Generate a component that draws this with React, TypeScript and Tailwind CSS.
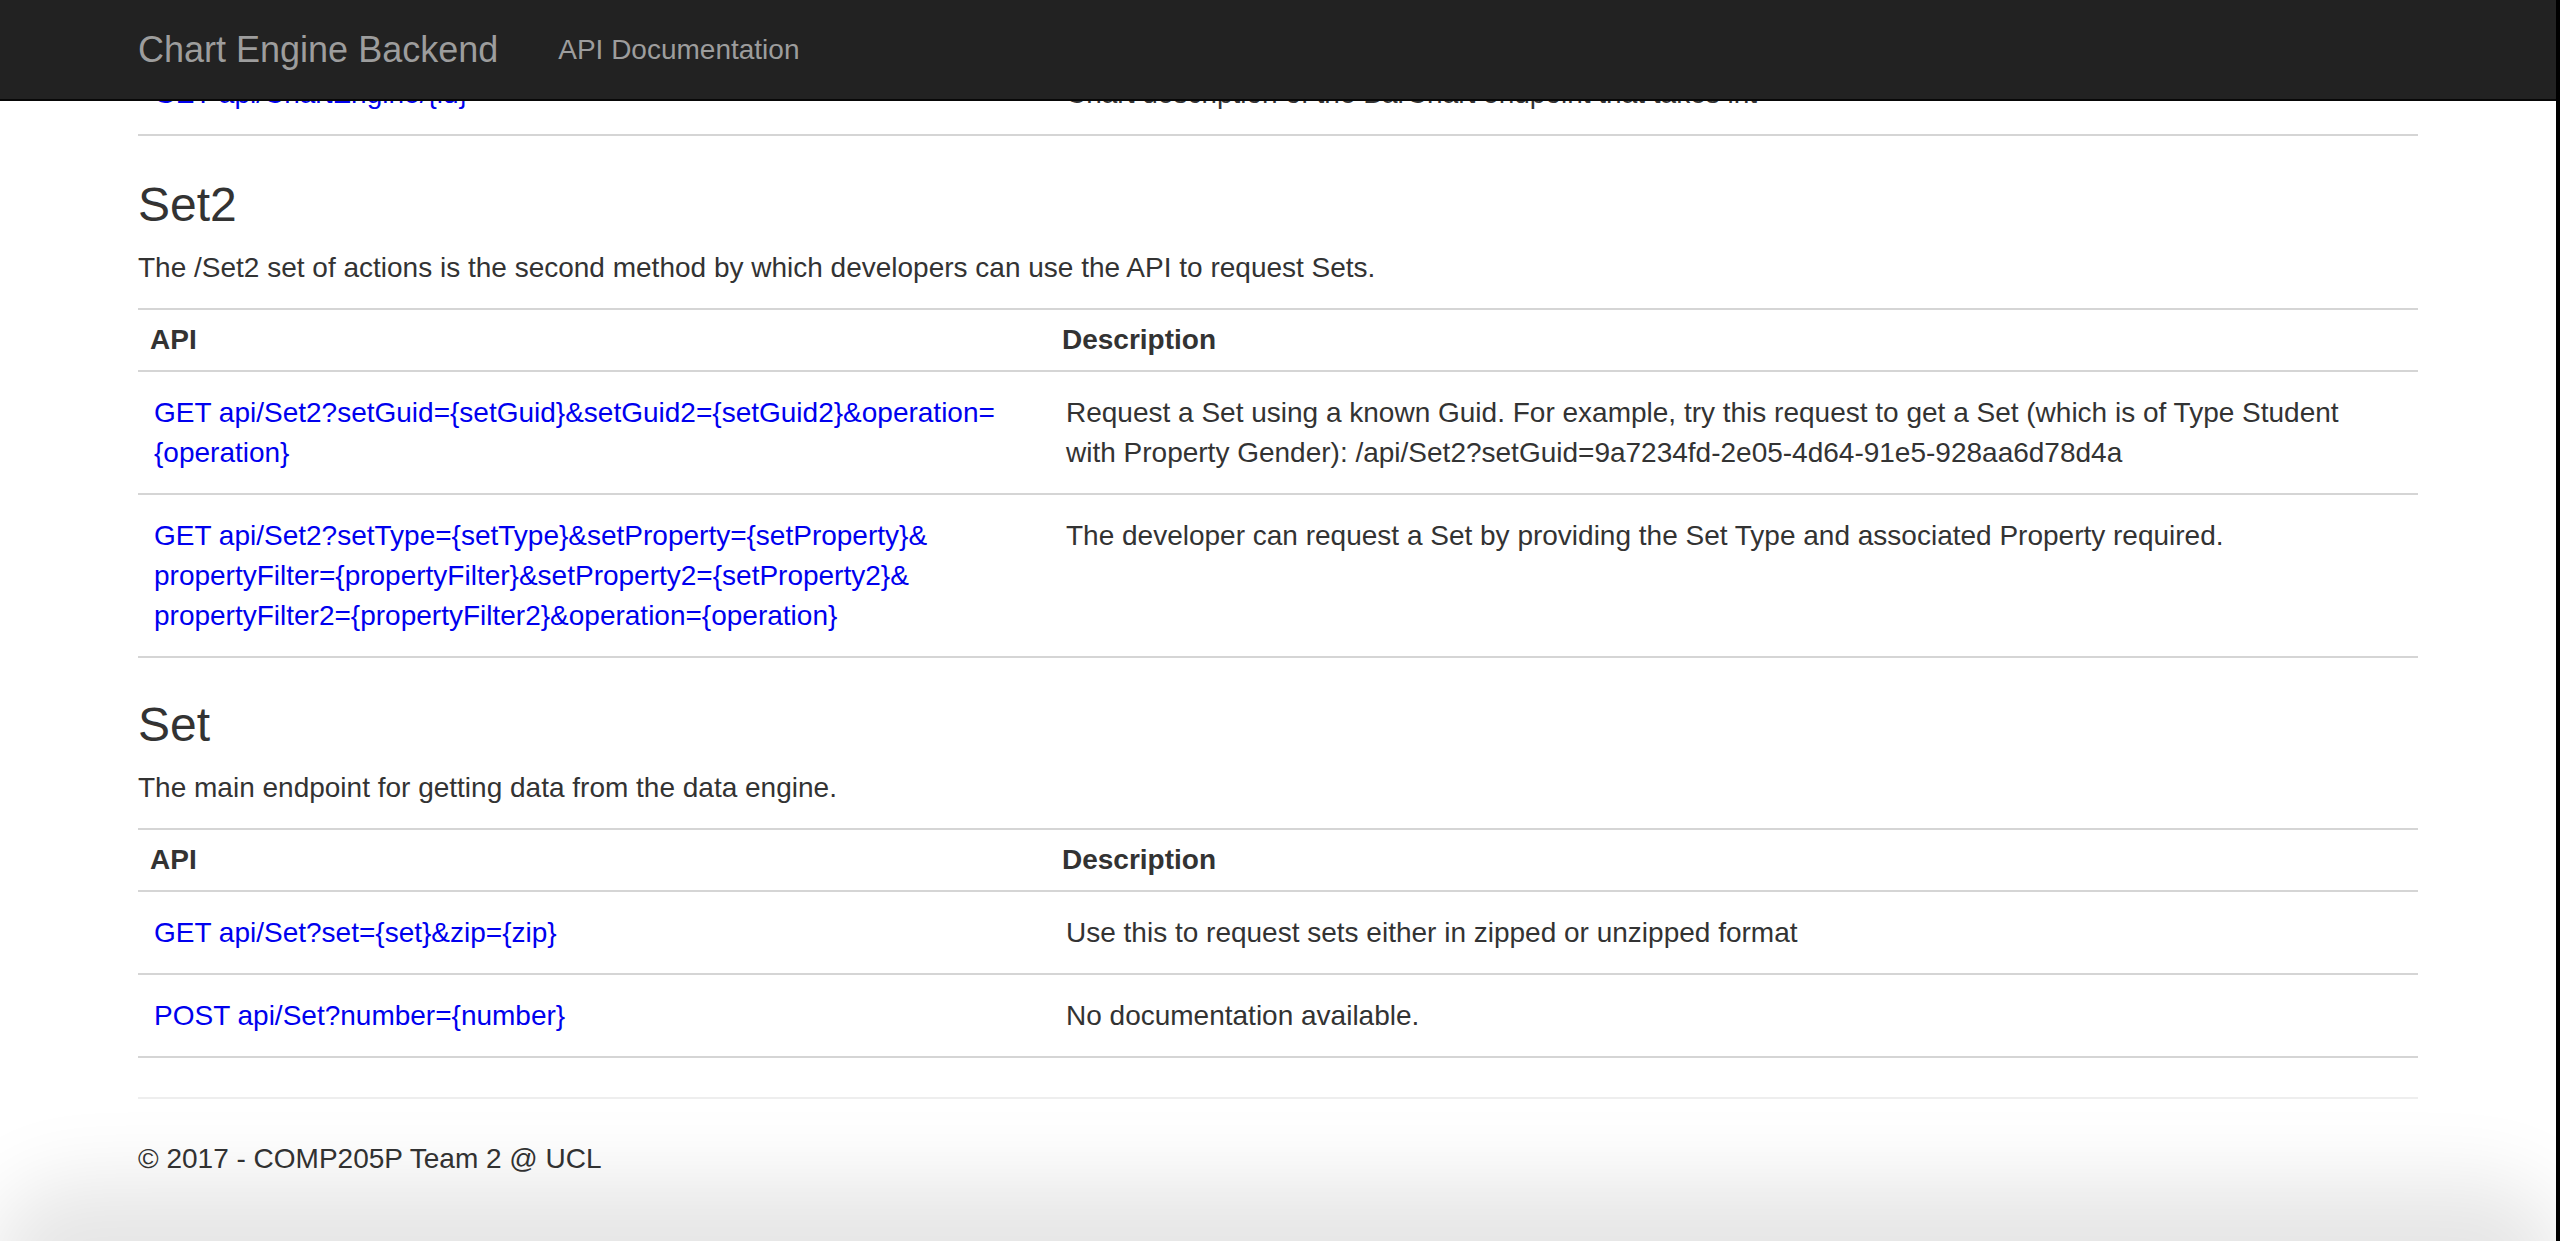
type Row = { api: string[]; desc: string[] };

const prevRows: Row[] = [
  { api: ["GET api/ChartEngine/{id}"], desc: ["Chart description of the BarChart endpoint that takes int"] },
];

const set2Rows: Row[] = [
  {
    api: ["GET api/Set2?setGuid={setGuid}&setGuid2={setGuid2}&operation=", "{operation}"],
    desc: [
      "Request a Set using a known Guid. For example, try this request to get a Set (which is of Type Student",
      "with Property Gender): /api/Set2?setGuid=9a7234fd-2e05-4d64-91e5-928aa6d78d4a",
    ],
  },
  {
    api: [
      "GET api/Set2?setType={setType}&setProperty={setProperty}&",
      "propertyFilter={propertyFilter}&setProperty2={setProperty2}&",
      "propertyFilter2={propertyFilter2}&operation={operation}",
    ],
    desc: ["The developer can request a Set by providing the Set Type and associated Property required."],
  },
];

const setRows: Row[] = [
  { api: ["GET api/Set?set={set}&zip={zip}"], desc: ["Use this to request sets either in zipped or unzipped format"] },
  { api: ["POST api/Set?number={number}"], desc: ["No documentation available."] },
];

const ApiTable = ({ rows, header = true }: { rows: Row[]; header?: boolean }) => (
  <div className="mb-[42px] border-b-2 border-[#d5d5d5]">
    {header && (
      <div className="flex border-t-2 border-[#d5d5d5] font-bold">
        <div className="w-[40%] px-[12px] py-[10px]">API</div>
        <div className="flex-1 px-[12px] py-[10px]">Description</div>
      </div>
    )}
    {rows.map((r, i) => (
      <div key={i} className="flex border-t-2 border-[#d5d5d5]">
        <div className="w-[40%] px-[16px] pb-[20px] pt-[21px]">
          <a href="#" className="text-[#0000ee]">
            {r.api.map((l, j) => (
              <span key={j} className="block whitespace-nowrap">{l}</span>
            ))}
          </a>
        </div>
        <div className="flex-1 px-[16px] pb-[20px] pt-[21px]">
          {r.desc.map((l, j) => (
            <span key={j} className="block whitespace-nowrap">{l}</span>
          ))}
        </div>
      </div>
    ))}
  </div>
);

const Section = ({ title, text, rows }: { title: string; text: string; rows: Row[] }) => (
  <section>
    <h3 className="mb-[17px] text-[48px] font-normal leading-[53px]">{title}</h3>
    <p className="mb-[20px]">{text}</p>
    <ApiTable rows={rows} />
  </section>
);

export default function App() {
  return (
    <div className="relative min-h-screen overflow-hidden border-r-4 border-black bg-white font-['Liberation_Sans',Arial,sans-serif] text-[28px] leading-[40px] text-[#333]">
      {/* fixed navbar */}
      <nav className="fixed left-0 right-[4px] top-0 z-10 h-[101px] border-b-2 border-[#080808] bg-[#222]">
        <div className="mx-auto flex h-full w-[2280px] items-center text-[#9d9d9d]">
          <a href="#" className="text-[36px] leading-[40px]">Chart Engine Backend</a>
          <a href="#" className="ml-[60px]">API Documentation</a>
        </div>
      </nav>

      <main className="mx-auto w-[2280px] pt-[51px]">
        <ApiTable rows={prevRows} header={false} />
        <Section
          title="Set2"
          text="The /Set2 set of actions is the second method by which developers can use the API to request Sets."
          rows={set2Rows}
        />
        <div className="-mt-[2px]">
          <Section title="Set" text="The main endpoint for getting data from the data engine." rows={setRows} />
        </div>

        <hr className="mb-[40px] mt-[-3px] border-t-2 border-[#eee]" />
        <footer className="pb-[80px]">
          <p>© 2017 - COMP205P Team 2 @ UCL</p>
        </footer>
      </main>

      {/* window bottom shadow */}
      <div className="pointer-events-none fixed bottom-[-60px] left-[50px] right-[54px] h-[60px] rounded-[40px] bg-[#e2e2e2] shadow-[0_0_80px_60px_rgba(0,0,0,0.1)]" />
    </div>
  );
}
